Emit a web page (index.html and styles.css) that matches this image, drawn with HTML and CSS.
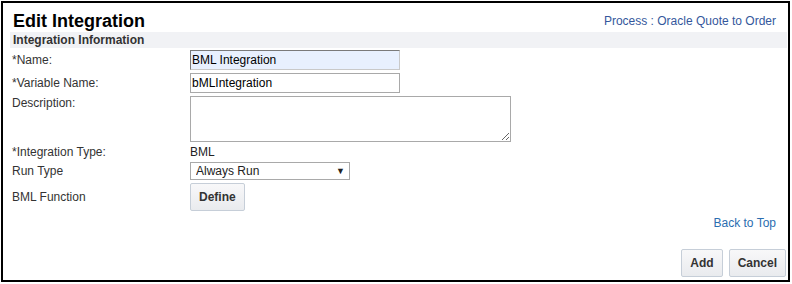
FILE: index.html
```html
<!DOCTYPE html>
<html lang="en">
	<head>
		<meta charset="UTF-8" />
		<meta name="viewport" content="width=device-width, initial-scale=1.0" />
		<title>Edit Integration</title>
		<link rel="stylesheet" href="styles.css">
	</head>
	<body>
		<div class="frame">
			<div class="page-header">
				<h1 class="title">Edit Integration</h1>
				<a class="process-link" href="#">Process : Oracle Quote to Order</a>
			</div>

			<h2 class="section-title">Integration Information</h2>

			<form class="form">
				<label class="form-label" for="name">*Name:</label>
				<input id="name" class="text-input autofilled" type="text" value="BML Integration" />

				<label class="form-label" for="varname">*Variable Name:</label>
				<input id="varname" class="text-input" type="text" value="bMLIntegration" />

				<label class="form-label top" for="description">Description:</label>
				<textarea id="description" class="text-area"></textarea>

				<span class="form-label">*Integration Type:</span>
				<span class="form-value">BML</span>

				<label class="form-label" for="runtype">Run Type</label>
				<div class="select-wrap">
					<select id="runtype" class="select">
						<option>Always Run</option>
					</select>
				</div>

				<span class="form-label">BML Function</span>
				<div>
					<button type="button" class="button">Define</button>
				</div>
			</form>

			<div class="back-to-top">
				<a href="#">Back to Top</a>
			</div>

			<div class="actions">
				<button type="button" class="button">Add</button>
				<button type="button" class="button">Cancel</button>
			</div>
		</div>
	</body>
</html>
```

FILE: styles.css
```css
body {
	margin: 0;
	font-family: Arial, "Liberation Sans", Helvetica, sans-serif;
	font-size: 12px;
	color: #333;
	background: #fff;
}

.frame {
	box-sizing: border-box;
	width: 789px;
	height: 281px;
	margin: 1px;
	padding: 0 1px 0 7px;
	border: 2px solid #000;
}

.page-header {
	display: flex;
	align-items: center;
	justify-content: space-between;
	height: 29px;
	padding: 7px 11px 0 3px;
	box-sizing: border-box;
}

.title {
	margin: 0;
	font-size: 18px;
	line-height: 20px;
	font-weight: bold;
	color: #000;
}

.process-link {
	line-height: 14px;
	color: #34579c;
	text-decoration: none;
}

.section-title {
	margin: 0;
	padding-left: 3px;
	height: 16px;
	font-size: 12px;
	line-height: 16px;
	font-weight: bold;
	color: #333;
	background-color: #f1f2f5;
}

.form {
	display: grid;
	grid-template-columns: 178px 1fr;
	row-gap: 3px;
	margin-top: 2px;
	padding-left: 2px;
	align-items: center;
}

.form-label {
	line-height: 14px;
	color: #333;
}

.form-label.top {
	align-self: start;
}

.form-value {
	line-height: 14px;
	color: #222;
}

.text-input {
	box-sizing: border-box;
	width: 210px;
	height: 20px;
	margin: 0;
	padding: 0 1px;
	font-family: inherit;
	font-size: 12px;
	color: #000;
	border: 1px solid #a9a9a9;
	border-radius: 0;
	outline: none;
}

.text-input.autofilled {
	background-color: #e8f0fe;
	border-color: #7a7a7a #c9c9c9 #c9c9c9 #7a7a7a;
}

.text-area {
	box-sizing: border-box;
	width: 321px;
	height: 46px;
	margin: 0;
	font-family: inherit;
	font-size: 12px;
	border: 1px solid #a9a9a9;
	border-radius: 0;
}

.select-wrap {
	position: relative;
	width: 160px;
}

.select-wrap::after {
	content: "\25BC";
	position: absolute;
	right: 5px;
	top: 3px;
	font-size: 9px;
	line-height: 12px;
	color: #222;
	pointer-events: none;
}

.select {
	display: block;
	box-sizing: border-box;
	width: 160px;
	height: 18px;
	margin: 0;
	padding: 0 0 0 5px;
	font-family: inherit;
	font-size: 12px;
	color: #222;
	background: #fff;
	border: 1px solid #a9a9a9;
	border-radius: 0;
	appearance: none;
	-webkit-appearance: none;
}

.button {
	height: 28px;
	margin: 0;
	padding: 0 8px;
	font-family: inherit;
	font-size: 12px;
	font-weight: bold;
	color: #333;
	background: linear-gradient(#f8f8f9, #e9ebee);
	border: 1px solid #c6ced8;
	border-radius: 2px;
}

.back-to-top {
	margin-top: 5px;
	padding-right: 11px;
	line-height: 14px;
	text-align: right;
}

.back-to-top a {
	color: #2a6db0;
	text-decoration: none;
}

.actions {
	display: flex;
	justify-content: flex-end;
	gap: 6px;
	margin-top: 19px;
	padding-right: 1px;
}
```
